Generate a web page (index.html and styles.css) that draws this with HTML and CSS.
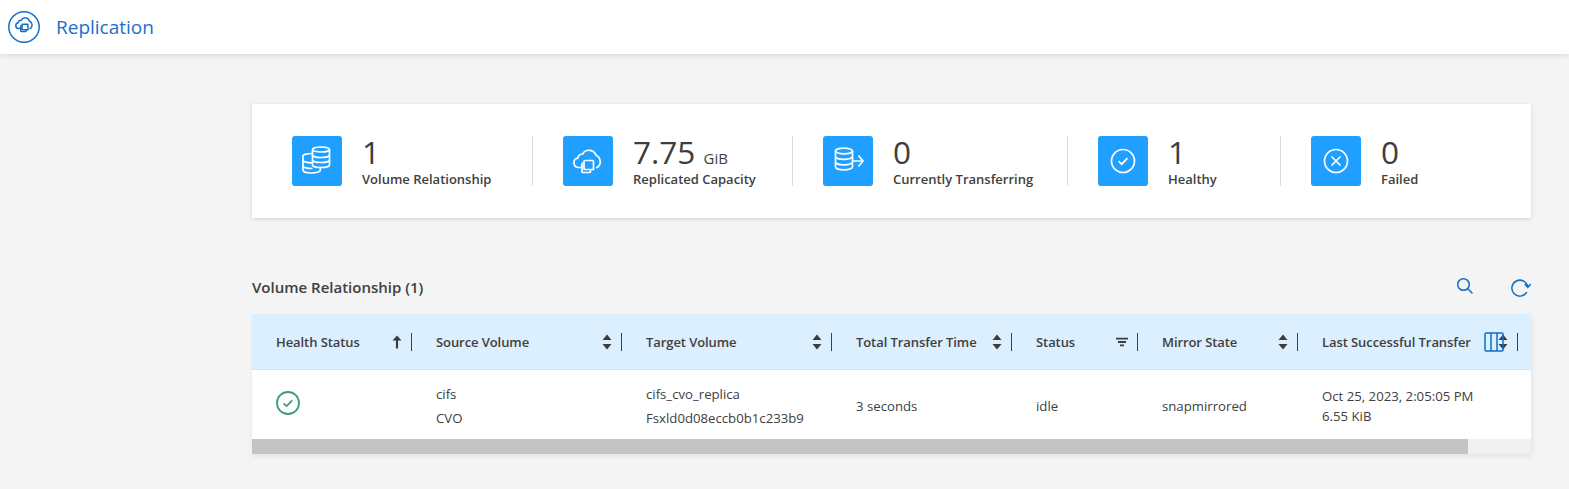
FILE: index.html
```html
<!DOCTYPE html>
<html lang="en">
<head>
    <meta charset="UTF-8">
    <meta name="viewport" content="width=device-width, initial-scale=1.0">
    <title>Replication</title>
    <link rel="stylesheet" href="styles.css">
</head>
<body>
    <svg class="defs" width="0" height="0">
        <symbol id="cloud" viewBox="0 0 50 50">
            <path d="M19 31.500h-3.500a4.700 4.700 0 0 1-.8-9.300 4.600 4.600 0 0 1 5-4.200 7.300 7.300 0 0 1 13.300 1.300 7.100 7.100 0 0 1 1.300 12.200h-1.300" />
            <path d="M22 24.500h7.500a1 1 0 0 1 1 1v8h-8.500a1 1 0 0 1-1-1v-7a1 1 0 0 1 1-1z" />
            <path d="M21 27h-1a1 1 0 0 0-1 1v7.500a1 1 0 0 0 1 1h6.500a1 1 0 0 0 1-1v-2" />
        </symbol>
    </svg>

    <header class="topbar">
        <svg class="topbar-icon" viewBox="0 0 32 32">
            <circle cx="16" cy="16" r="15.200" />
            <use class="topbar-cloud" href="#cloud" x="1" y="-2" width="31" height="31" />
        </svg>
        <span class="topbar-title">Replication</span>
    </header>

    <main class="content">
        <section class="stats">
            <div class="stat">
                <div class="stat-icon">
                    <svg viewBox="0 0 50 50">
                        <ellipse cx="29" cy="13.500" rx="8.500" ry="2.500" />
                        <path d="M20.500 13.500v15.500c0 1.400 3.800 2.500 8.500 2.500s8.500-1.100 8.500-2.500v-15.500" />
                        <path d="M20.500 19c0 1.400 3.800 2.500 8.500 2.500s8.500-1.100 8.500-2.500M20.500 24c0 1.400 3.800 2.500 8.500 2.500s8.500-1.100 8.500-2.500" />
                        <path d="M20.500 17.500c-5.500 0-9.500 1-9.500 2.300v14.500c0 1.600 3.900 2.700 8.500 2.700s8.800-1.100 8.800-2.700v-2.800" />
                        <path d="M11 24.500c0 1.300 4 2.300 9.500 2.300M11 30c0 1.400 4 2.500 9.500 2.500" />
                    </svg>
                </div>
                <div class="stat-text">
                    <div class="stat-value">1</div>
                    <div class="stat-label">Volume Relationship</div>
                </div>
            </div>
            <div class="stat">
                <div class="stat-icon">
                    <svg viewBox="0 0 50 50"><use href="#cloud" /></svg>
                </div>
                <div class="stat-text">
                    <div class="stat-value">7.75 <span class="stat-unit">GiB</span></div>
                    <div class="stat-label">Replicated Capacity</div>
                </div>
            </div>
            <div class="stat">
                <div class="stat-icon">
                    <svg viewBox="0 0 50 50">
                        <ellipse cx="21" cy="15" rx="8.500" ry="2.800" />
                        <path d="M12.500 15v16c0 1.500 3.800 2.800 8.500 2.800s8.500-1.300 8.500-2.800v-16" />
                        <path d="M12.500 20.500c0 1.500 3.800 2.800 8.500 2.800s8.500-1.300 8.500-2.800M12.500 26c0 1.500 3.800 2.800 8.500 2.800s8.500-1.300 8.500-2.800" />
                        <path d="M29.500 25h10M35.500 19.500l4.500 5.500-4.500 5.500" />
                    </svg>
                </div>
                <div class="stat-text">
                    <div class="stat-value">0</div>
                    <div class="stat-label">Currently Transferring</div>
                </div>
            </div>
            <div class="stat">
                <div class="stat-icon">
                    <svg viewBox="0 0 50 50">
                        <circle cx="25" cy="25" r="11.500" />
                        <path d="M20.500 25.200l3.200 3 5.800-6" />
                    </svg>
                </div>
                <div class="stat-text">
                    <div class="stat-value">1</div>
                    <div class="stat-label">Healthy</div>
                </div>
            </div>
            <div class="stat">
                <div class="stat-icon">
                    <svg viewBox="0 0 50 50">
                        <circle cx="25" cy="25" r="11.500" />
                        <path d="M20.500 20.500l9 9M29.500 20.500l-9 9" />
                    </svg>
                </div>
                <div class="stat-text">
                    <div class="stat-value">0</div>
                    <div class="stat-label">Failed</div>
                </div>
            </div>
        </section>

        <div class="list-head">
            <h2 class="list-title">Volume Relationship (1)</h2>
            <div class="list-tools">
                <svg class="tool" viewBox="0 0 18 18">
                    <circle cx="7.500" cy="7.500" r="5.800" />
                    <path d="M11.800 11.800l4.700 4.700" />
                </svg>
                <svg class="tool tool-refresh" viewBox="0 0 20 18">
                    <path d="M15.800 13.200a8 8 0 1 1 1-5.200" />
                    <path d="M13.800 5l3 3.300 3-3.300" />
                </svg>
            </div>
        </div>

        <section class="grid">
            <div class="grid-row grid-head">
                <div class="th"><span class="th-label">Health Status</span><svg class="sort" viewBox="0 0 10 14"><path d="M5 0.500l4.500 5h-3.400v8h-2.200v-8h-3.400z" /></svg><i class="th-sep"></i></div>
                <div class="th"><span class="th-label">Source Volume</span><svg class="sort" viewBox="0 0 10 16"><path d="M5 0.500l4.500 5.500h-9zM5 15.500l-4.500-5.500h9z" /></svg><i class="th-sep"></i></div>
                <div class="th"><span class="th-label">Target Volume</span><svg class="sort" viewBox="0 0 10 16"><path d="M5 0.500l4.500 5.500h-9zM5 15.500l-4.500-5.500h9z" /></svg><i class="th-sep"></i></div>
                <div class="th"><span class="th-label">Total Transfer Time</span><svg class="sort" viewBox="0 0 10 16"><path d="M5 0.500l4.500 5.500h-9zM5 15.500l-4.500-5.500h9z" /></svg><i class="th-sep"></i></div>
                <div class="th"><span class="th-label">Status</span><svg class="sort filter" viewBox="0 0 12 10"><path d="M0 0.800h12v1.800h-12zM2 4.100h8v1.800h-8zM4 7.400h4v1.800h-4z" /></svg><i class="th-sep"></i></div>
                <div class="th"><span class="th-label">Mirror State</span><svg class="sort" viewBox="0 0 10 16"><path d="M5 0.500l4.500 5.500h-9zM5 15.500l-4.500-5.500h9z" /></svg><i class="th-sep"></i></div>
                <div class="th"><span class="th-label">Last Successful Transfer</span><svg class="sort" viewBox="0 0 10 16"><path d="M5 0.500l4.500 5.500h-9zM5 15.500l-4.500-5.500h9z" /></svg><i class="th-sep"></i></div>
                <svg class="col-picker" viewBox="0 0 20 20">
                    <rect x="1" y="1" width="18" height="18" rx="1" />
                    <path d="M7 1v18M13 1v18" />
                </svg>
            </div>
            <div class="grid-row grid-body">
                <div class="td">
                    <svg class="health" viewBox="0 0 24 24">
                        <circle cx="12" cy="12" r="11" />
                        <path d="M7.500 12.300l3 2.800 5.800-5.800" />
                    </svg>
                </div>
                <div class="td td-pair"><span>cifs</span><span>CVO</span></div>
                <div class="td td-pair"><span>cifs_cvo_replica</span><span>Fsxld0d08eccb0b1c233b9</span></div>
                <div class="td td-single">3 seconds</div>
                <div class="td td-single">idle</div>
                <div class="td td-single">snapmirrored</div>
                <div class="td td-tight"><span>Oct 25, 2023, 2:05:05 PM</span><span>6.55 KiB</span></div>
            </div>
            <div class="scrollbar"><div class="scroll-thumb"></div></div>
        </section>
    </main>
</body>
</html>
```

FILE: styles.css
```css
* {
    box-sizing: border-box;
}
body {
    margin: 0;
    height: 489px;
    overflow: hidden;
    background-color: #f4f4f4;
    font-family: "Open Sans", sans-serif;
    color: #404040;
}
.defs {
    position: absolute;
}

/* top bar */
.topbar {
    display: flex;
    align-items: center;
    height: 54px;
    padding-left: 8px;
    background-color: #fff;
    box-shadow: 0 1px 6px rgba(0, 0, 0, 0.12);
}
.topbar-icon {
    width: 32px;
    height: 32px;
    fill: none;
    stroke: #0f6fc6;
    stroke-width: 1.500;
}
.topbar-cloud {
    stroke-width: 2.400;
}
.topbar-title {
    margin-left: 16px;
    font-size: 19px;
    color: #1b6ec9;
}

.content {
    width: 1279px;
    margin-left: 252px;
    padding-top: 50px;
}

/* summary card */
.stats {
    display: grid;
    grid-template-columns: 241px 230px 245px 183px 1fr;
    column-gap: 30px;
    height: 114px;
    padding: 32px 0 0 40px;
    background-color: #fff;
    box-shadow: 0 1px 4px rgba(0, 0, 0, 0.14);
}
.stat {
    display: flex;
    height: 50px;
    border-right: 1px solid #dcdcdc;
}
.stat:last-child {
    border-right: 0;
}
.stat-icon {
    flex: none;
    width: 50px;
    height: 50px;
    border-radius: 3px;
    background-color: #1f9fff;
    fill: none;
    stroke: #fff;
    stroke-width: 1.700;
}
.stat-icon svg {
    display: block;
    width: 50px;
    height: 50px;
}
.stat-text {
    margin-left: 20px;
}
.stat-value {
    height: 34px;
    font-size: 31.500px;
    line-height: 31px;
    color: #3d3d3d;
}
.stat-unit {
    margin-left: 0;
    font-size: 15px;
    line-height: 15px;
}
.stat-label {
    font-size: 13px;
    font-weight: 600;
    line-height: 18px;
    color: #404040;
}

/* list heading */
.list-head {
    display: flex;
    align-items: center;
    justify-content: space-between;
    height: 96px;
    padding-top: 42px;
}
.list-title {
    margin: 0;
    font-size: 15px;
    font-weight: 600;
    color: #404040;
}
.list-tools {
    display: flex;
    gap: 37px;
    margin-top: -1px;
}
.tool {
    width: 18px;
    height: 18px;
    fill: none;
    stroke: #0f6fc6;
    stroke-width: 1.500;
}
.tool-refresh {
    width: 20px;
    margin-top: 2px;
}

/* table */
.grid {
    box-shadow: 1px 2px 5px rgba(0, 0, 0, 0.08);
}
.grid-row {
    display: grid;
    grid-template-columns: 160px 210px 210px 180px 126px 160px 220px;
}
.grid-head {
    position: relative;
    height: 56px;
    border-bottom: 1px solid #d8e4ec;
    background-color: #dcefff;
}
.th {
    display: flex;
    align-items: center;
    padding-left: 24px;
    font-size: 13px;
    font-weight: 600;
    letter-spacing: -0.08px;
    white-space: nowrap;
}
.th-label {
    flex: 1;
}
.sort {
    flex: none;
    width: 10px;
    height: 16px;
    fill: #3d3d3d;
}
.filter {
    width: 12px;
    height: 10px;
}
.th-sep {
    flex: none;
    width: 1px;
    height: 18px;
    margin-left: 9px;
    background-color: #404040;
}
.col-picker {
    position: absolute;
    left: 1232px;
    top: 18px;
    width: 20px;
    height: 20px;
    fill: none;
    stroke: #0f6fc6;
    stroke-width: 1.500;
}
.grid-body {
    height: 69px;
    background-color: #fff;
}
.td {
    display: flex;
    align-items: center;
    padding-left: 24px;
    font-size: 13.200px;
    white-space: nowrap;
}
.td-single {
    padding-top: 2px;
}
.td-pair {
    flex-direction: column;
    align-items: flex-start;
    justify-content: center;
    gap: 6px;
    padding-top: 3px;
    line-height: 18px;
}
.td-tight {
    flex-direction: column;
    align-items: flex-start;
    justify-content: center;
    gap: 2px;
    padding-top: 2px;
    line-height: 18px;
}
.health {
    width: 24px;
    height: 24px;
    margin-top: -3px;
    fill: none;
    stroke: #3d9a7d;
    stroke-width: 1.800;
}
.scrollbar {
    height: 15px;
    background-color: #f1f1f1;
}
.scroll-thumb {
    width: 1216px;
    height: 15px;
    background-color: #c4c4c4;
}
```
